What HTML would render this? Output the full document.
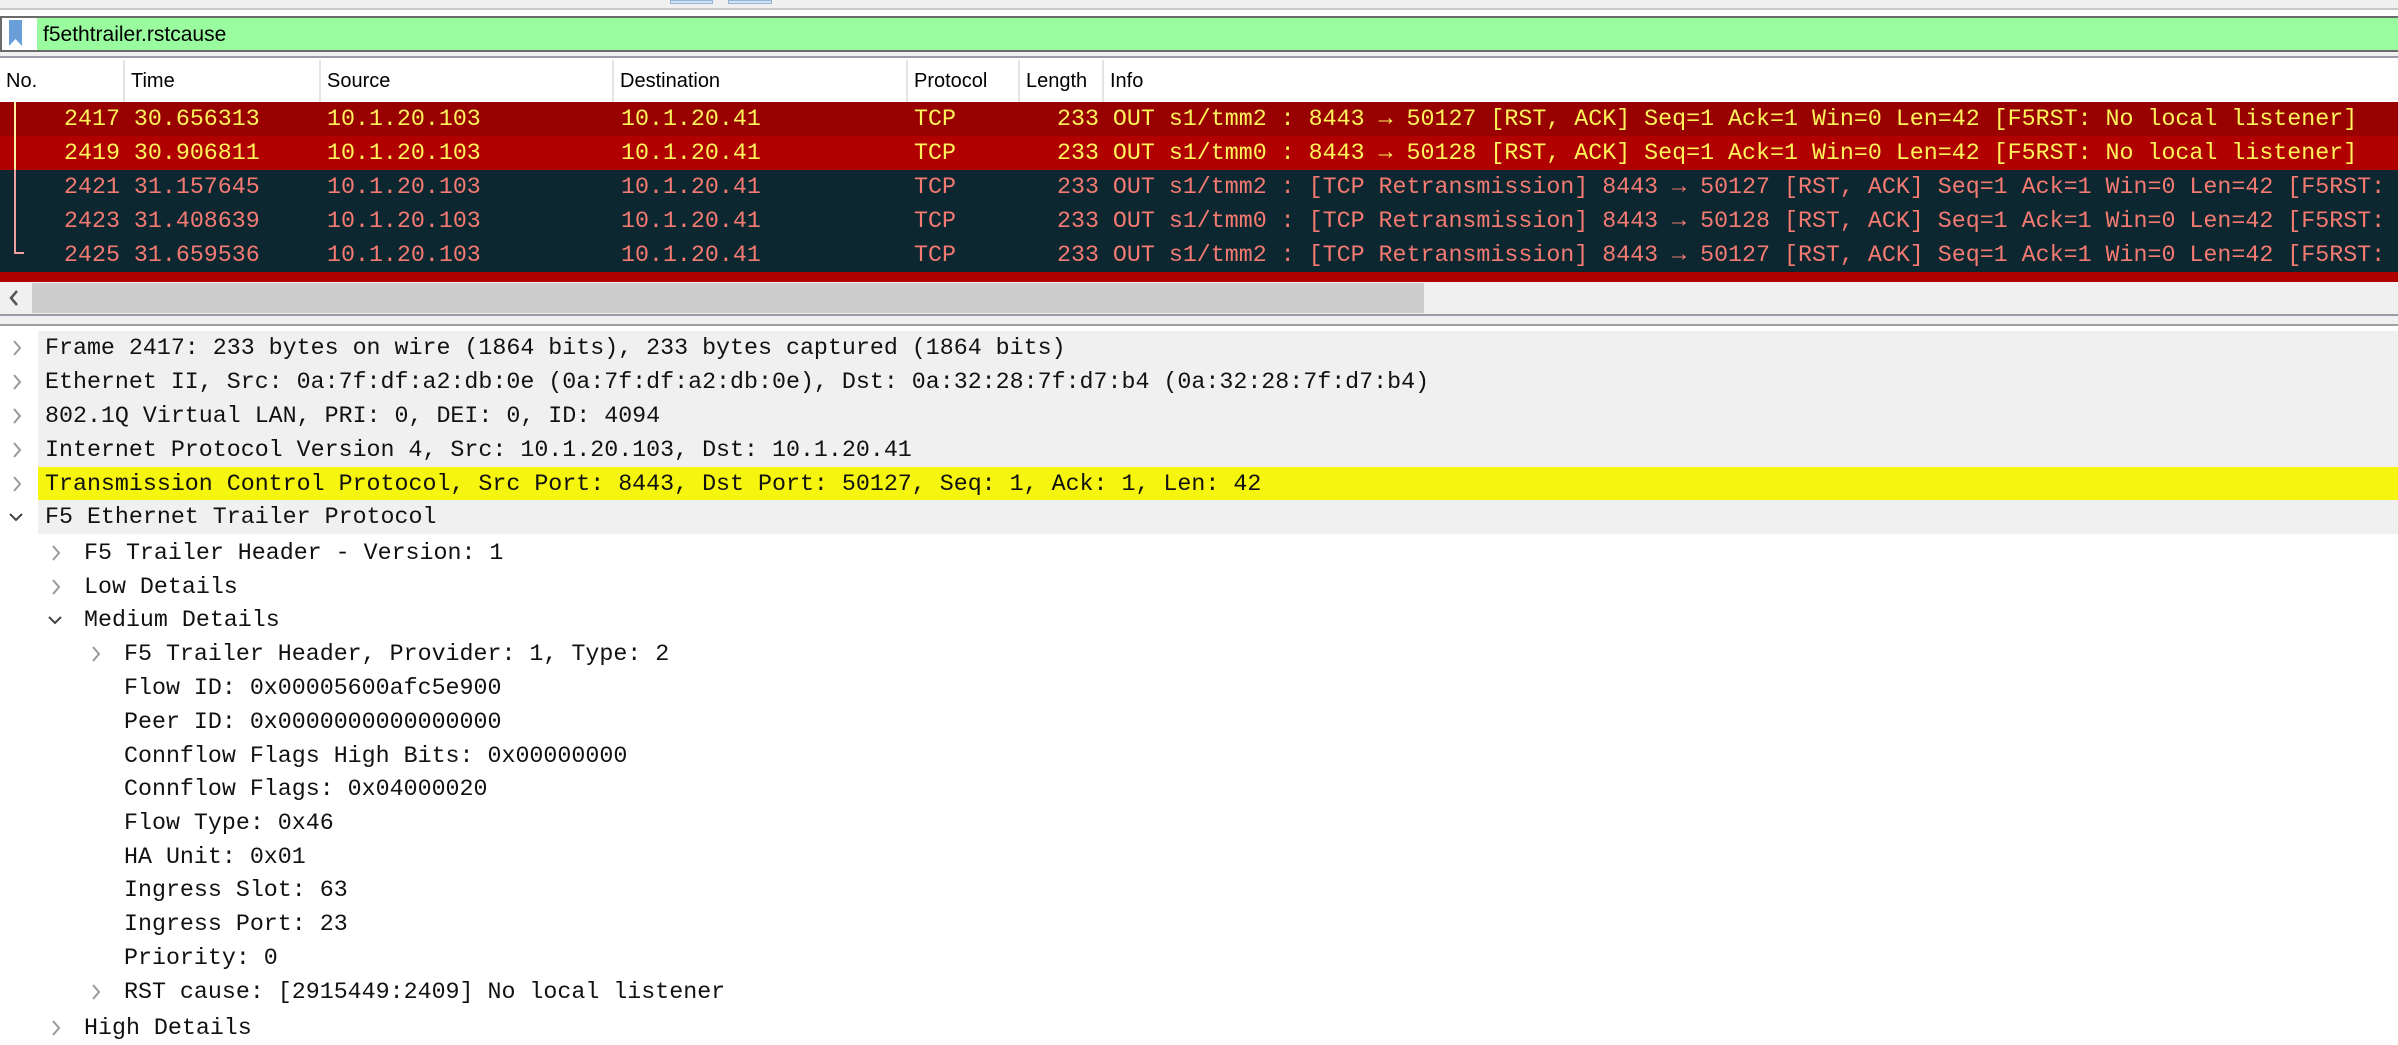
<!DOCTYPE html>
<html><head><meta charset="utf-8"><style>
*{margin:0;padding:0;box-sizing:border-box}
body{width:2398px;height:1028px;overflow:hidden;background:#fff;position:relative;font-family:"Liberation Mono",monospace;font-size:23.3px}
.a{position:absolute}
.mono{font-family:"Liberation Mono",monospace;font-size:23.3px;white-space:pre}
.sans{font-family:"Liberation Sans",sans-serif;font-size:20px;white-space:pre}
.row{position:absolute;left:0;width:2398px;height:34px;line-height:34px}
.row span{position:absolute;top:0}
.r1{background:#990000;color:#fff45a}
.r2{background:#b00000;color:#fff45a}
.r3{background:#0c2730;color:#f47a72}
.d{position:absolute;left:0;width:2398px;height:34px;line-height:34px;color:#111}
.d span{position:absolute;top:0}
.d svg{position:absolute;top:9px}
.g{background:#f0f0f0}
.hd{position:absolute;top:60px;height:42px;line-height:42px;border-right:2px solid #e4e4e4;padding-left:6px;color:#000}
</style></head><body>
<div class="a" style="left:0;top:0;width:2398px;height:10px;background:#f0f0f0;border-bottom:2px solid #c8c8c8"></div>
<div class="a" style="left:670px;top:0;width:43px;height:4px;background:#cce4f7;border:1px solid #99b4d1"></div>
<div class="a" style="left:728px;top:0;width:44px;height:4px;background:#cce4f7;border:1px solid #99b4d1"></div>
<div class="a" style="left:0;top:16px;width:2398px;height:36px;background:#99fd9f;border:2px solid #6a6a6a;border-right:none"></div>
<div class="a" style="left:2px;top:18px;width:35px;height:32px;background:#fff"></div>
<svg class="a" style="left:9px;top:20px" width="14" height="27"><path d="M0 0H13V26L6.5 19L0 26Z" fill="#6a9ed8"/></svg>
<div class="a sans" style="left:43px;top:19px;line-height:32px;font-size:21px;color:#000">f5ethtrailer.rstcause</div>
<div class="a" style="left:0;top:52px;width:2398px;height:6px;background:#f0f0f0;border-bottom:2px solid #9a9aa8"></div>
<div class="hd sans" style="left:0;width:125px">No.</div>
<div class="hd sans" style="left:125px;width:196px">Time</div>
<div class="hd sans" style="left:321px;width:293px">Source</div>
<div class="hd sans" style="left:614px;width:294px">Destination</div>
<div class="hd sans" style="left:908px;width:112px">Protocol</div>
<div class="hd sans" style="left:1020px;width:84px">Length</div>
<div class="hd sans" style="left:1104px;width:1050px;border-right:none">Info</div>
<div class="row r1 mono" style="top:102px"><span style="left:64px">2417 30.656313</span><span style="left:327px">10.1.20.103</span><span style="left:621px">10.1.20.41</span><span style="left:914px">TCP</span><span style="left:1057px">233 OUT s1/tmm2 : 8443 → 50127 [RST, ACK] Seq=1 Ack=1 Win=0 Len=42 [F5RST: No local listener]</span></div>
<div class="row r2 mono" style="top:136px"><span style="left:64px">2419 30.906811</span><span style="left:327px">10.1.20.103</span><span style="left:621px">10.1.20.41</span><span style="left:914px">TCP</span><span style="left:1057px">233 OUT s1/tmm0 : 8443 → 50128 [RST, ACK] Seq=1 Ack=1 Win=0 Len=42 [F5RST: No local listener]</span></div>
<div class="row r3 mono" style="top:170px"><span style="left:64px">2421 31.157645</span><span style="left:327px">10.1.20.103</span><span style="left:621px">10.1.20.41</span><span style="left:914px">TCP</span><span style="left:1057px">233 OUT s1/tmm2 : [TCP Retransmission] 8443 → 50127 [RST, ACK] Seq=1 Ack=1 Win=0 Len=42 [F5RST:</span></div>
<div class="row r3 mono" style="top:204px"><span style="left:64px">2423 31.408639</span><span style="left:327px">10.1.20.103</span><span style="left:621px">10.1.20.41</span><span style="left:914px">TCP</span><span style="left:1057px">233 OUT s1/tmm0 : [TCP Retransmission] 8443 → 50128 [RST, ACK] Seq=1 Ack=1 Win=0 Len=42 [F5RST:</span></div>
<div class="row r3 mono" style="top:238px"><span style="left:64px">2425 31.659536</span><span style="left:327px">10.1.20.103</span><span style="left:621px">10.1.20.41</span><span style="left:914px">TCP</span><span style="left:1057px">233 OUT s1/tmm2 : [TCP Retransmission] 8443 → 50127 [RST, ACK] Seq=1 Ack=1 Win=0 Len=42 [F5RST:</span></div>
<div class="row r2" style="top:272px;height:10px"></div>
<div class="a" style="left:14px;top:102px;width:2px;height:150px;background:#fff0a0"></div>
<div class="a" style="left:14px;top:170px;width:2px;height:84px;background:#f0a0a0"></div>
<div class="a" style="left:14px;top:252px;width:10px;height:2px;background:#f0a0a0"></div>
<div class="a" style="left:0;top:282px;width:2398px;height:32px;background:#f0f0f0"></div>
<div class="a" style="left:32px;top:283px;width:1392px;height:30px;background:#cdcdcd"></div>
<svg class="a" style="left:8px;top:289px" width="12" height="18"><path d="M9 2L3 9L9 16" fill="none" stroke="#555" stroke-width="2.5"/></svg>
<div class="a" style="left:0;top:314px;width:2398px;height:12px;background:#f0f0f0;border-top:2px solid #9a9aa8;border-bottom:2px solid #a0a0a0"></div>
<svg width="0" height="0" style="position:absolute"><defs>
<symbol id="r" viewBox="0 0 14 16"><path d="M4 1L10 8L4 15" fill="none" stroke="#9a9a9a" stroke-width="2"/></symbol>
<symbol id="dn" viewBox="0 0 14 16"><path d="M1 5L7 11L13 5" fill="none" stroke="#444" stroke-width="2"/></symbol>
</defs></svg>
<div class="d mono" style="top:331px"><div class="a g" style="left:38px;top:0;width:2360px;height:34px"></div><svg style="left:10px" width="14" height="16"><use href="#r"/></svg><span style="left:45px">Frame 2417: 233 bytes on wire (1864 bits), 233 bytes captured (1864 bits)</span></div>
<div class="d mono" style="top:365px"><div class="a g" style="left:38px;top:0;width:2360px;height:34px"></div><svg style="left:10px" width="14" height="16"><use href="#r"/></svg><span style="left:45px">Ethernet II, Src: 0a:7f:df:a2:db:0e (0a:7f:df:a2:db:0e), Dst: 0a:32:28:7f:d7:b4 (0a:32:28:7f:d7:b4)</span></div>
<div class="d mono" style="top:399px"><div class="a g" style="left:38px;top:0;width:2360px;height:34px"></div><svg style="left:10px" width="14" height="16"><use href="#r"/></svg><span style="left:45px">802.1Q Virtual LAN, PRI: 0, DEI: 0, ID: 4094</span></div>
<div class="d mono" style="top:433px"><div class="a g" style="left:38px;top:0;width:2360px;height:34px"></div><svg style="left:10px" width="14" height="16"><use href="#r"/></svg><span style="left:45px">Internet Protocol Version 4, Src: 10.1.20.103, Dst: 10.1.20.41</span></div>
<div class="d mono" style="top:467px"><div class="a" style="left:38px;top:0;width:2360px;height:34px;background:#f5f50f"></div><svg style="left:10px" width="14" height="16"><use href="#r"/></svg><span style="left:45px">Transmission Control Protocol, Src Port: 8443, Dst Port: 50127, Seq: 1, Ack: 1, Len: 42</span></div>
<div class="d mono" style="top:500px"><div class="a g" style="left:38px;top:0;width:2360px;height:34px"></div><svg style="left:9px" width="14" height="16"><use href="#dn"/></svg><span style="left:45px">F5 Ethernet Trailer Protocol</span></div>
<div class="d mono" style="top:536px"><svg style="left:49px" width="14" height="16"><use href="#r"/></svg><span style="left:84px">F5 Trailer Header - Version: 1</span></div>
<div class="d mono" style="top:570px"><svg style="left:49px" width="14" height="16"><use href="#r"/></svg><span style="left:84px">Low Details</span></div>
<div class="d mono" style="top:603px"><svg style="left:48px" width="14" height="16"><use href="#dn"/></svg><span style="left:84px">Medium Details</span></div>
<div class="d mono" style="top:637px"><svg style="left:89px" width="14" height="16"><use href="#r"/></svg><span style="left:124px">F5 Trailer Header, Provider: 1, Type: 2</span></div>
<div class="d mono" style="top:671px"><span style="left:124px">Flow ID: 0x00005600afc5e900</span></div>
<div class="d mono" style="top:705px"><span style="left:124px">Peer ID: 0x0000000000000000</span></div>
<div class="d mono" style="top:739px"><span style="left:124px">Connflow Flags High Bits: 0x00000000</span></div>
<div class="d mono" style="top:772px"><span style="left:124px">Connflow Flags: 0x04000020</span></div>
<div class="d mono" style="top:806px"><span style="left:124px">Flow Type: 0x46</span></div>
<div class="d mono" style="top:840px"><span style="left:124px">HA Unit: 0x01</span></div>
<div class="d mono" style="top:873px"><span style="left:124px">Ingress Slot: 63</span></div>
<div class="d mono" style="top:907px"><span style="left:124px">Ingress Port: 23</span></div>
<div class="d mono" style="top:941px"><span style="left:124px">Priority: 0</span></div>
<div class="d mono" style="top:975px"><svg style="left:89px" width="14" height="16"><use href="#r"/></svg><span style="left:124px">RST cause: [2915449:2409] No local listener</span></div>
<div class="d mono" style="top:1011px"><svg style="left:49px" width="14" height="16"><use href="#r"/></svg><span style="left:84px">High Details</span></div>
</body></html>
